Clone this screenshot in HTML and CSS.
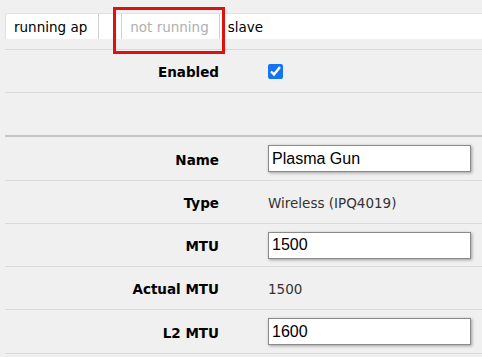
FILE: index.html
```html
<!DOCTYPE html>
<html lang="en">
<head>
  <meta charset="UTF-8">
  <title>Interface</title>
  <link rel="stylesheet" href="styles.css">
</head>
<body>

<!-- Tab strip -->
<div class="tabs">
  <div class="tab first">running ap</div>
  <div class="tab-gap"></div>
  <div class="tab off">not running</div>
  <div class="tab plain">slave</div>
</div>
<div class="highlight"></div>

<!-- Form -->
<div class="form">
  <div class="row">
    <div class="label">Enabled</div>
    <div class="value"><input type="checkbox" checked></div>
  </div>
  <div class="row empty"></div>
  <div class="row tall">
    <div class="label">Name</div>
    <div class="value"><input class="field" type="text" value="Plasma Gun"></div>
  </div>
  <div class="row">
    <div class="label">Type</div>
    <div class="value text">Wireless (IPQ4019)</div>
  </div>
  <div class="row">
    <div class="label">MTU</div>
    <div class="value"><input class="field" type="text" value="1500"></div>
  </div>
  <div class="row">
    <div class="label">Actual MTU</div>
    <div class="value text">1500</div>
  </div>
  <div class="row tall">
    <div class="label">L2 MTU</div>
    <div class="value"><input class="field" type="text" value="1600"></div>
  </div>
</div>

</body>
</html>
```

FILE: styles.css
```css
body {
  margin: 0;
  background-color: #f0f0f0;
  font-family: "DejaVu Sans", Verdana, sans-serif;
  font-size: 13.5px;
  color: #000;
}

/* Tab strip */
.tabs {
  display: flex;
  margin: 13px 0 0 5px;
  height: 25px;
  background: #fff;
  border-top: 1px solid #e2e2e2;
  line-height: 26px;
}

.tab {
  padding: 0 10px 0 8px;
  border-right: 1px solid #d0d0d0;
}

.tab.first {
  padding-right: 11px;
  border-left: 1px solid #e2e2e2;
}

.tab-gap {
  width: 22px;
}

.tab.off {
  color: #b0b0b0;
  border-left: 1px solid #d0d0d0;
}

.tab.plain {
  border-right: none;
}

/* Red annotation box */
.highlight {
  position: absolute;
  left: 113px;
  top: 7px;
  width: 106px;
  height: 41px;
  border: 3px solid #e01010;
}

/* Form rows */
.form {
  margin: 10px 0 0 5px;
  border-top: 1px solid #dadada;
}

.row {
  display: grid;
  grid-template-columns: 214px 1fr;
  column-gap: 49px;
  align-items: center;
  height: 42px;
  border-bottom: 1px solid #dadada;
}

.row.tall {
  height: 43px;
}

.row.empty {
  border-bottom: 2px solid #c4c4c4;
}

.label {
  text-align: right;
  font-weight: bold;
  padding-top: 2px;
}

.value.text {
  color: #333;
  padding-top: 2px;
}

.field {
  box-sizing: border-box;
  width: 203px;
  height: 27px;
  padding: 0 3px;
  border: 1px solid #8a8a8a;
  background: #fff;
  font-family: "Liberation Sans", Arial, sans-serif;
  font-size: 16px;
  color: #000;
  box-shadow: 1px 1px 3px rgba(0, 0, 0, 0.35);
  outline: none;
}

input[type="checkbox"] {
  width: 15px;
  height: 15px;
  margin: 0;
  display: block;
  accent-color: #1473f0;
}
```
